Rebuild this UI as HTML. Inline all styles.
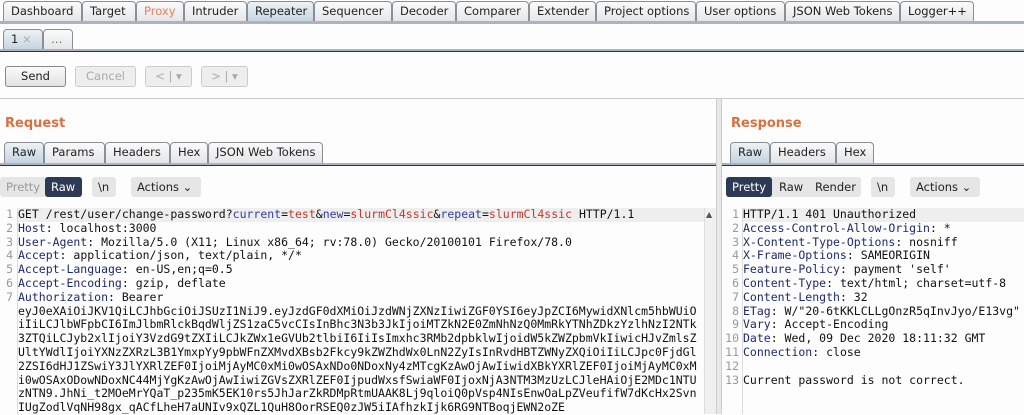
<!DOCTYPE html>
<html><head><meta charset="utf-8"><style>
*{box-sizing:border-box;margin:0;padding:0}
body{width:1024px;height:414px;overflow:hidden;background:#fdfdfd;font-family:"DejaVu Sans","Liberation Sans",sans-serif;font-size:12px;color:#222;position:relative}
.abs{position:absolute}
.tab{position:absolute;top:1px;height:21px;border:1px solid #8a8f96;border-bottom:none;border-radius:4px 4px 0 0;background:linear-gradient(#fbfbfb,#e3e5e8);font-size:11.5px;line-height:19px;padding-left:7px;color:#222;white-space:nowrap}
.tab.sel{background:linear-gradient(#eef2f6,#c4d3e0)}
.btn{position:absolute;height:21px;border:1px solid #888;border-radius:3px;background:linear-gradient(#fafafa,#e2e2e2);font-size:11.5px;text-align:center;line-height:19px}
.btn.dis{border-color:#ccc;color:#aaa;background:#eee}
.hd{position:absolute;color:#d9703f;font-weight:bold;font-size:13px}
.pill{position:absolute;height:20px;border-radius:3px;background:#e6e6e6;font-size:11.5px;line-height:20px;padding:0 6px;color:#222}
.code{position:absolute;font-family:"DejaVu Sans Mono","Liberation Mono",monospace;font-size:11.5px;line-height:13.8px;white-space:pre;color:#111}
.n{color:#1d2a6b}.b{color:#2f3fa0}.r{color:#c0392b}
.ln{position:absolute;font-family:"DejaVu Sans Mono",monospace;font-size:11.5px;line-height:13.8px;white-space:pre;color:#999;text-align:right}
</style></head><body>
<!-- top tabs -->
<div class="tab" style="left:3px;width:79px">Dashboard</div>
<div class="tab" style="left:82px;width:54px">Target</div>
<div class="tab" style="left:136px;width:48px;color:#e08060">Proxy</div>
<div class="tab" style="left:184px;width:63px">Intruder</div>
<div class="tab sel" style="left:247px;width:67px">Repeater</div>
<div class="tab" style="left:314px;width:78px">Sequencer</div>
<div class="tab" style="left:392px;width:64px">Decoder</div>
<div class="tab" style="left:456px;width:73px">Comparer</div>
<div class="tab" style="left:529px;width:67px">Extender</div>
<div class="tab" style="left:596px;width:100px">Project options</div>
<div class="tab" style="left:696px;width:89px">User options</div>
<div class="tab" style="left:785px;width:115px">JSON Web Tokens</div>
<div class="tab" style="left:900px;width:74px">Logger++</div>
<div class="abs" style="left:0;top:21px;width:1024px;height:3px;background:#a9b4c0"></div>
<!-- second row -->
<div class="tab sel" style="left:3px;top:29px;width:40px;height:21px;color:#222">1 <span style="color:#aaa">×</span></div>
<div class="tab" style="left:43px;top:29px;width:30px;height:21px;color:#666">…</div>
<div class="abs" style="left:0;top:49px;width:1024px;height:2px;background:#a9b4c0"></div>
<div class="abs" style="left:0;top:51px;width:1024px;height:1px;background:#333"></div>
<!-- buttons -->
<div class="btn" style="left:5px;top:66px;width:61px">Send</div>
<div class="btn dis" style="left:75px;top:66px;width:61px">Cancel</div>
<div class="btn dis" style="left:145px;top:66px;width:47px">&lt; | ▾</div>
<div class="btn dis" style="left:201px;top:66px;width:47px">&gt; | ▾</div>
<div class="abs" style="left:0;top:98px;width:1024px;height:1px;background:#ccc"></div>
<!-- divider -->
<div class="abs" style="left:716px;top:99px;width:6px;height:315px;background:#e8e8e8;border-left:1px solid #ccc;border-right:1px solid #ccc"></div>
<!-- Request -->
<div class="hd" style="left:5px;top:116px">Request</div>
<div class="tab sel" style="left:4px;top:142px;width:40px">Raw</div>
<div class="tab" style="left:44px;top:142px;width:61px">Params</div>
<div class="tab" style="left:105px;top:142px;width:65px">Headers</div>
<div class="tab" style="left:170px;top:142px;width:38px">Hex</div>
<div class="tab" style="left:208px;top:142px;width:115px">JSON Web Tokens</div>
<div class="abs" style="left:0;top:163px;width:716px;height:2px;background:#a9b4c0"></div>
<div class="abs" style="left:0;top:165px;width:716px;height:1px;background:#333"></div>
<div class="pill" style="left:0;top:177px;width:82px;color:#999">Pretty</div>
<div class="pill" style="left:45px;top:177px;width:37px;background:#2d3a55;color:#fff">Raw</div>
<div class="pill" style="left:92px;top:177px;width:24px">\n</div>
<div class="pill" style="left:131px;top:177px;width:70px">Actions ⌄</div>
<div class="abs" style="left:17px;top:208px;width:1px;height:206px;background:#ddd"></div>
<div class="abs" style="left:18px;top:208px;width:686px;height:14px;background:#eee"></div>
<div class="ln" style="left:0;top:208px;width:13px">1
2
3
4
5
6
7</div>
<div class="code" style="left:18px;top:208px">GET /rest/user/change-password?<span class="b">current</span>=<span class="r">test</span>&amp;<span class="b">new</span>=<span class="r">slurmCl4ssic</span>&amp;<span class="b">repeat</span>=<span class="r">slurmCl4ssic</span> HTTP/1.1
<span class="n">Host</span>: localhost:3000
<span class="n">User-Agent</span>: Mozilla/5.0 (X11; Linux x86_64; rv:78.0) Gecko/20100101 Firefox/78.0
<span class="n">Accept</span>: application/json, text/plain, */*
<span class="n">Accept-Language</span>: en-US,en;q=0.5
<span class="n">Accept-Encoding</span>: gzip, deflate
<span class="n">Authorization</span>: Bearer
eyJ0eXAiOiJKV1QiLCJhbGciOiJSUzI1NiJ9.eyJzdGF0dXMiOiJzdWNjZXNzIiwiZGF0YSI6eyJpZCI6MywidXNlcm5hbWUiO
iIiLCJlbWFpbCI6ImJlbmRlckBqdWljZS1zaC5vcCIsInBhc3N3b3JkIjoiMTZkN2E0ZmNhNzQ0MmRkYTNhZDkzYzlhNzI2NTk
3ZTQiLCJyb2xlIjoiY3VzdG9tZXIiLCJkZWx1eGVUb2tlbiI6IiIsImxhc3RMb2dpbklwIjoidW5kZWZpbmVkIiwicHJvZmlsZ
UltYWdlIjoiYXNzZXRzL3B1YmxpYy9pbWFnZXMvdXBsb2Fkcy9kZWZhdWx0LnN2ZyIsInRvdHBTZWNyZXQiOiIiLCJpc0FjdGl
2ZSI6dHJ1ZSwiY3JlYXRlZEF0IjoiMjAyMC0xMi0wOSAxNDo0NDoxNy4zMTcgKzAwOjAwIiwidXBkYXRlZEF0IjoiMjAyMC0xM
i0wOSAxODowNDoxNC44MjYgKzAwOjAwIiwiZGVsZXRlZEF0IjpudWxsfSwiaWF0IjoxNjA3NTM3MzUzLCJleHAiOjE2MDc1NTU
zNTN9.JhNi_t2MOeMrYQaT_p235mK5EK10rs5JhJarZkRDMpRtmUAAK8Lj9qloiQ0pVsp4NIsEnwOaLpZVeufifW7dKcHx2Svn
IUgZodlVqNH98gx_qACfLheH7aUNIv9xQZL1QuH8OorRSEQ0zJW5iIAfhzkIjk6RG9NTBoqjEWN2oZE</div>
<!-- scrollbar -->
<div class="abs" style="left:704px;top:208px;width:12px;height:206px;background:#f0f0f0;border-left:1px solid #ddd"></div>
<div class="abs" style="left:706px;top:210px;font-size:8px;color:#555">▲</div>
<!-- Response -->
<div class="hd" style="left:731px;top:116px">Response</div>
<div class="tab sel" style="left:730px;top:142px;width:40px">Raw</div>
<div class="tab" style="left:770px;top:142px;width:66px">Headers</div>
<div class="tab" style="left:836px;top:142px;width:38px">Hex</div>
<div class="abs" style="left:722px;top:163px;width:302px;height:2px;background:#a9b4c0"></div>
<div class="abs" style="left:722px;top:165px;width:302px;height:1px;background:#333"></div>
<div class="pill" style="left:726px;top:177px;width:135px"></div>
<div class="pill" style="left:726px;top:177px;width:46px;background:#2d3a55;color:#fff">Pretty</div>
<div class="abs" style="left:779px;top:177px;font-size:11.5px;line-height:20px">Raw</div>
<div class="abs" style="left:815px;top:177px;font-size:11.5px;line-height:20px">Render</div>
<div class="pill" style="left:871px;top:177px;width:24px">\n</div>
<div class="pill" style="left:910px;top:177px;width:70px">Actions ⌄</div>
<div class="abs" style="left:742px;top:208px;width:1px;height:206px;background:#ddd"></div>
<div class="abs" style="left:743px;top:208px;width:281px;height:14px;background:#eee"></div>
<div class="ln" style="left:722px;top:208px;width:17px">1
2
3
4
5
6
7
8
9
10
11
12
13</div>
<div class="code" style="left:743px;top:208px">HTTP/1.1 401 Unauthorized
<span class="n">Access-Control-Allow-Origin</span>: *
<span class="n">X-Content-Type-Options</span>: nosniff
<span class="n">X-Frame-Options</span>: SAMEORIGIN
<span class="n">Feature-Policy</span>: payment 'self'
<span class="n">Content-Type</span>: text/html; charset=utf-8
<span class="n">Content-Length</span>: 32
<span class="n">ETag</span>: W/"20-6tKKLCLLgOnzR5qInvJyo/E13vg"
<span class="n">Vary</span>: Accept-Encoding
<span class="n">Date</span>: Wed, 09 Dec 2020 18:11:32 GMT
<span class="n">Connection</span>: close

Current password is not correct.</div>
</body></html>
